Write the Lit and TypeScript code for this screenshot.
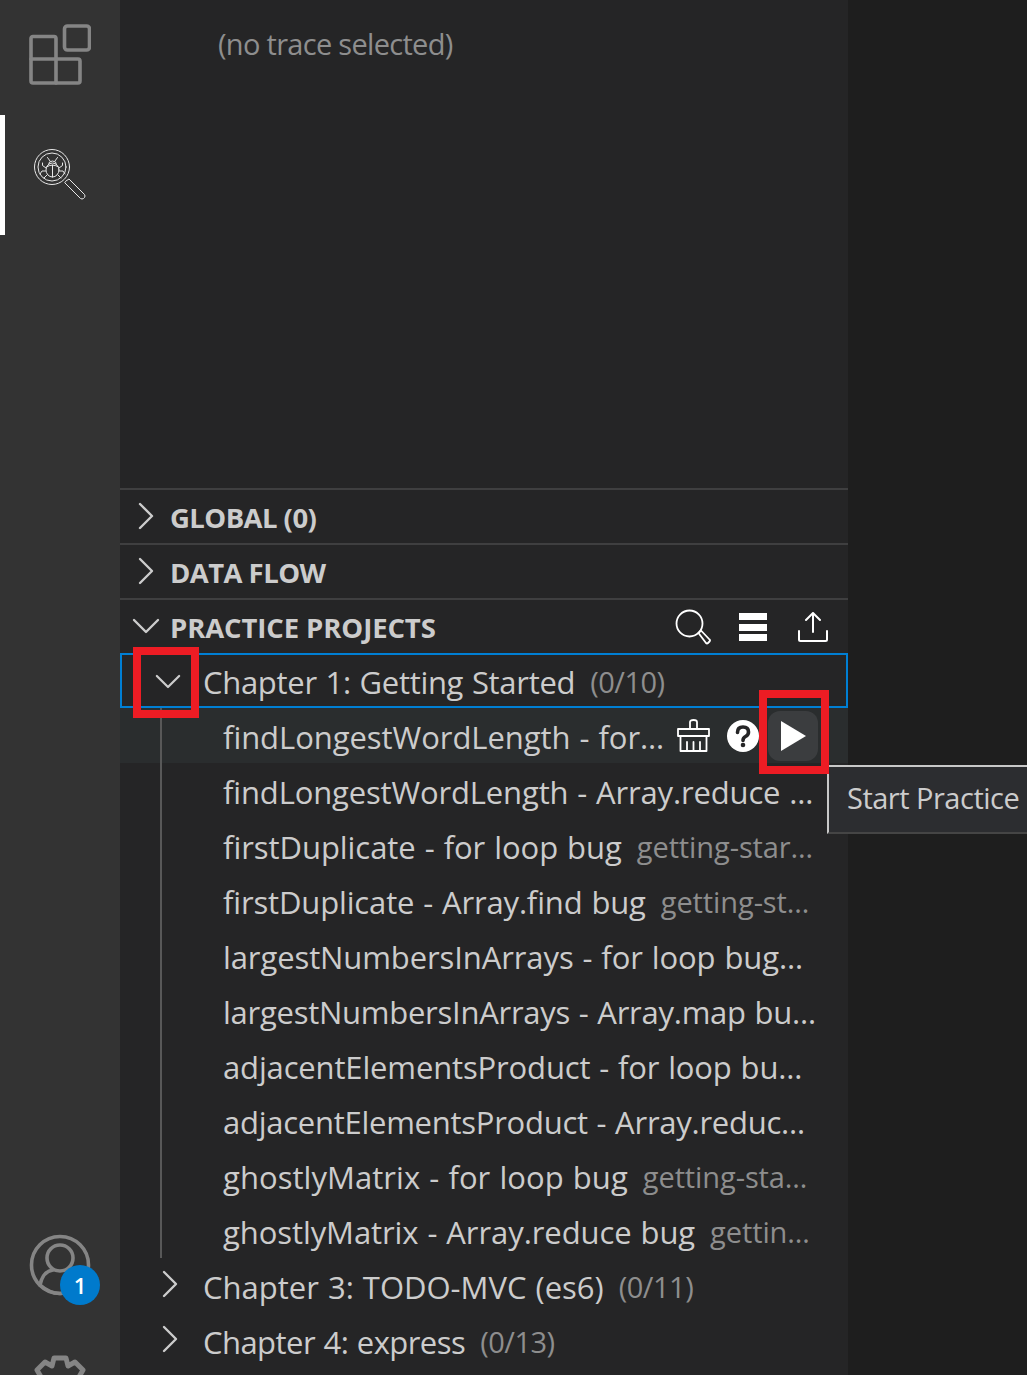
import { LitElement, html, css, svg } from 'lit';
import { customElement } from 'lit/decorators.js';

// track: per-row letter spacing (px), evens out the width difference of the fallback font
type Project = { label: string; desc?: string; track: number };

const PROJECTS: Project[] = [
  { label: 'findLongestWordLength - Array.reduce …', track: -0.15 },
  { label: 'firstDuplicate - for loop bug', desc: 'getting-star…', track: -0.05 },
  { label: 'firstDuplicate - Array.find bug', desc: 'getting-st…', track: -0.15 },
  { label: 'largestNumbersInArrays - for loop bug…', track: -0.1 },
  { label: 'largestNumbersInArrays - Array.map bu…', track: -0.26 },
  { label: 'adjacentElementsProduct - for loop bu…', track: -0.15 },
  { label: 'adjacentElementsProduct - Array.reduc…', track: -0.26 },
  { label: 'ghostlyMatrix - for loop bug', desc: 'getting-sta…', track: 0.05 },
  { label: 'ghostlyMatrix - Array.reduce bug', desc: 'gettin…', track: -0.08 },
];

const CHAPTERS: Project[] = [
  { label: 'Chapter 3: TODO-MVC (es6)', desc: '(0/11)', track: 0 },
  { label: 'Chapter 4: express', desc: '(0/13)', track: -0.55 },
];

const chevronRight = html`<svg class="chev" viewBox="0 0 16 28"><path d="M2 2l12 12L2 26" /></svg>`;
const chevronDown = html`<svg class="chev-down" viewBox="0 0 28 16"><path d="M2 2l12 12L26 2" /></svg>`;

@customElement('app-root')
export class AppRoot extends LitElement {
  static styles = css`
    :host {
      display: flex;
      position: relative;
      height: 1375px;
      overflow: hidden;
      background: #1e1e1e;
      color: #cccccc;
      font-family: 'Open Sans', 'Noto Sans', sans-serif;
      font-size: 31px;
      letter-spacing: -0.05px;
      word-spacing: 1px;
    }

    svg {
      display: block;
      fill: none;
      stroke-linecap: round;
      stroke-linejoin: round;
    }

    .activity {
      position: relative;
      flex: 0 0 120px;
      display: flex;
      flex-direction: column;
      background: #333333;
    }

    .activity-item {
      position: relative;
      height: 120px;
      display: flex;
      align-items: center;
      justify-content: center;
    }

    .activity-item.first {
      height: 115px;
      box-sizing: border-box;
      padding: 0 2px 5px 0;
    }

    .activity-item.active {
      border-left: 5px solid #ffffff;
      padding-right: 5px;
      box-sizing: border-box;
    }

    .activity-bottom {
      margin-top: auto;
      margin-bottom: -36px;
      display: flex;
      flex-direction: column;
      align-items: center;
      gap: 62px;
    }

    .account {
      position: relative;
      width: 120px;
      height: 60px;
    }

    .account svg {
      margin: 0 auto;
    }

    .badge {
      position: absolute;
      left: 60px;
      top: 32px;
      width: 40px;
      height: 40px;
      border-radius: 50%;
      background: #007acc;
      color: #ffffff;
      font-size: 22px;
      font-weight: 600;
      letter-spacing: 0;
      display: flex;
      align-items: center;
      justify-content: center;
    }

    .sidebar {
      flex: 0 0 728px;
      display: flex;
      flex-direction: column;
      background: #252526;
      overflow: hidden;
    }

    .trace {
      flex: 0 0 488px;
      box-sizing: border-box;
      padding: 21px 0 0 98px;
      font-size: 29px;
      line-height: 46px;
      letter-spacing: -0.7px;
      word-spacing: 0;
      color: #8e8e8e;
    }

    .section {
      flex: 0 0 55px;
      box-sizing: border-box;
      height: 55px;
      display: flex;
      align-items: center;
      padding-top: 2px;
      border-top: 2.5px solid #3f3f40;
      font-size: 27.5px;
      font-weight: 700;
      letter-spacing: -0.55px;
      word-spacing: 0;
    }

    .section.wide {
      letter-spacing: -0.1px;
    }

    .section .twist {
      flex: 0 0 50px;
      display: flex;
      justify-content: center;
      margin-bottom: 4px;
      padding-left: 1px;
      box-sizing: border-box;
    }

    .section .actions {
      margin: 0 20px 2px auto;
      display: flex;
      align-items: center;
      gap: 28px;
    }

    .section .actions .list {
      margin-right: 3px;
    }

    .row {
      flex: 0 0 55px;
      box-sizing: border-box;
      height: 55px;
      display: flex;
      align-items: center;
      padding-top: 2px;
      white-space: nowrap;
    }

    .row.chapter {
      padding-left: 40px;
      letter-spacing: -0.3px;
    }

    .row.chapter .twist {
      flex: 0 0 43px;
      display: flex;
      margin-bottom: 5px;
      padding-left: 2px;
      box-sizing: border-box;
    }

    .row.focused {
      border: 2px solid #007fd4;
      padding-left: 31px;
    }

    .row.focused .twist {
      flex: 0 0 50px;
      margin-bottom: 0;
    }

    .row.focused .chev-down {
      width: 26px;
      height: 15px;
    }

    .row.project {
      padding-left: 103px;
    }

    .row.hover {
      background: #2a2d2e;
    }

    .desc {
      margin-left: 15px;
      font-size: 29px;
      letter-spacing: -0.1px;
      word-spacing: 0;
      color: #8e8e8e;
    }

    .chapter .desc {
      letter-spacing: -0.5px;
    }

    .tree {
      position: relative;
      display: flex;
      flex-direction: column;
    }

    .guide {
      position: absolute;
      left: 40px;
      top: 0;
      bottom: 0;
      width: 2px;
      background: #585858;
    }

    .row-actions {
      margin: 0 30px 2px auto;
      display: flex;
      align-items: center;
    }

    .row-actions .clean {
      margin-right: 17px;
    }

    .play {
      width: 50px;
      height: 50px;
      margin-left: 9px;
      padding-left: 2px;
      box-sizing: border-box;
      border-radius: 12px;
      background: #3b3d3f;
      display: flex;
      align-items: center;
      justify-content: center;
    }

    .chev {
      width: 16px;
      height: 28px;
      stroke: #cccccc;
      stroke-width: 2.4;
    }

    .chev-down {
      width: 28px;
      height: 16px;
      stroke: #cccccc;
      stroke-width: 2.4;
    }

    .editor {
      flex: 1;
      background: #1e1e1e;
    }

    .tooltip {
      position: absolute;
      left: 827px;
      top: 765px;
      width: 200px;
      height: 69px;
      box-sizing: border-box;
      padding: 0 0 4px 18px;
      display: flex;
      align-items: center;
      background: #2c2d30;
      border-top: 2.5px solid #c8c8c8;
      border-left: 2px solid #c8c8c8;
      border-bottom: 2.5px solid #454545;
      white-space: nowrap;
      font-size: 29px;
      letter-spacing: -0.5px;
      word-spacing: 0;
      color: #cccccc;
    }

    .mark {
      position: absolute;
      box-sizing: border-box;
      border: 8px solid #ed1c24;
    }

    .mark.chevron {
      left: 133px;
      top: 647px;
      width: 66px;
      height: 71px;
    }

    .mark.start {
      left: 759px;
      top: 690px;
      width: 70px;
      height: 84px;
    }
  `;

  private extensionsIcon() {
    return html`<svg width="64" height="64" viewBox="0 0 64 64" stroke="#858585" stroke-width="3.6">
      <path d="M4 15.5a2 2 0 0 1 2-2h21a2 2 0 0 1 2 2v44.500H6a2 2 0 0 1-2-2z" />
      <path d="M4 36h47a2 2 0 0 1 2 2v20a2 2 0 0 1-2 2H29" />
      <rect x="37.500" y="3" width="25" height="24" rx="3" />
    </svg>`;
  }

  private bugSearchIcon() {
    return html`<svg width="54" height="54" viewBox="0 0 54 54" stroke="#e8e8e8" stroke-width="1">
      <circle cx="19" cy="19" r="17.500" />
      <circle cx="19" cy="19" r="14" />
      <ellipse cx="19.500" cy="22" rx="6.500" ry="7" />
      <path d="M19.500 17v12M13.500 19q6-4 12 0" />
      <path d="M15.500 16.500q0-3.500 4-3.500t4 3.500" />
      <path d="M17 13l-2.500-3.500M22 13l2.500-3.500" />
      <path d="M13 20l-3.500-2.500V15M26 20l3.500-2.500V15M12.500 23H9l-2 3M26.500 23H30l2 3M14 27l-3 3M25 27l3 3" />
      <path d="M33 33l3-2 15.500 15.500q1 1.500 0 3l-1 1q-1.500 1-3 0L32 35z" />
    </svg>`;
  }

  private accountIcon() {
    return svg`<svg width="64" height="64" viewBox="0 0 64 64" stroke="#858585" stroke-width="3.6">
      <circle cx="32" cy="32" r="28.500" />
      <circle cx="32" cy="25" r="13" />
      <path d="M12 52q3-14 13-15M52 52q-3-14-13-15M12 52q20 17 40 0" />
    </svg>`;
  }

  private gearIcon() {
    return html`<svg width="56" height="56" viewBox="0 0 56 56" stroke="#858585" stroke-width="5">
      <path d="M22 3h12l2 8 7-4 8 8-4 7 8 2v12l-8 2 4 7-8 8-7-4-2 8H22l-2-8-7 4-8-8 4-7-8-2V24l8-2-4-7 8-8 7 4z" />
    </svg>`;
  }

  private searchIcon() {
    return html`<svg width="36" height="36" viewBox="0 0 36 36" stroke="#ffffff" stroke-width="1.800">
      <circle cx="14.500" cy="14.500" r="13" />
      <path d="M23.500 24l2.500-2.500 8.500 9q1 1 0 2l-1.500 1.500q-1 1-2 0z" />
    </svg>`;
  }

  private listIcon() {
    return html`<svg class="list" width="28" height="28" viewBox="0 0 28 28">
      <rect x="0" y="0" width="28" height="7" fill="#ffffff" />
      <rect x="0" y="11" width="28" height="7" fill="#ffffff" />
      <rect x="0" y="21" width="28" height="7" fill="#ffffff" />
    </svg>`;
  }

  private exportIcon() {
    return html`<svg width="30" height="30" viewBox="0 0 30 30" stroke="#ffffff" stroke-width="2">
      <path d="M15 20V1.500M8 8l7-7 7 7M1 19v8.500q0 1.500 1.500 1.500h25q1.500 0 1.500-1.500V19" />
    </svg>`;
  }

  private cleanIcon() {
    return html`<svg width="33" height="33" viewBox="0 0 33 33" stroke="#ffffff" stroke-width="1.800">
      <path d="M13 10V3q0-2 3.500-2T20 3v7" />
      <path d="M1 10h31v7H1z" />
      <path d="M3.500 17v15h26V17M10 32v-9M16.500 32v-9M23 32v-9" />
    </svg>`;
  }

  private helpIcon() {
    return html`<svg width="32" height="32" viewBox="0 0 32 32">
      <circle cx="16" cy="16" r="16" fill="#ffffff" />
      <path d="M10.500 12.500q0-5.500 5.500-5.500t5.500 5q0 3-3 4.500-2.500 1.300-2.500 4" stroke="#252526" stroke-width="3.600" />
      <circle cx="16" cy="25" r="2.300" fill="#252526" />
    </svg>`;
  }

  render() {
    return html`
      <nav class="activity">
        <div class="activity-item first">${this.extensionsIcon()}</div>
        <div class="activity-item active">${this.bugSearchIcon()}</div>
        <div class="activity-bottom">
          <div class="account">
            ${this.accountIcon()}
            <span class="badge">1</span>
          </div>
          ${this.gearIcon()}
        </div>
      </nav>

      <aside class="sidebar">
        <div class="trace">(no trace selected)</div>

        <div class="section"><span class="twist">${chevronRight}</span>GLOBAL (0)</div>
        <div class="section"><span class="twist">${chevronRight}</span>DATA FLOW</div>
        <div class="section wide">
          <span class="twist">${chevronDown}</span>PRACTICE PROJECTS
          <span class="actions">${this.searchIcon()}${this.listIcon()}${this.exportIcon()}</span>
        </div>

        <div class="row chapter focused">
          <span class="twist">${chevronDown}</span>Chapter 1: Getting Started
          <span class="desc">(0/10)</span>
        </div>

        <div class="tree">
          <div class="row project hover">
            findLongestWordLength - for…
            <span class="row-actions">
              <span class="clean">${this.cleanIcon()}</span>
              ${this.helpIcon()}
              <span class="play">
                <svg width="28" height="32" viewBox="0 0 28 32">
                  <path d="M1 1l25 15L1 31z" fill="#ffffff" />
                </svg>
              </span>
            </span>
          </div>
          ${PROJECTS.map(
            (p) => html`<div class="row project">
              <span style="letter-spacing: ${p.track}px">${p.label}</span>
              ${p.desc ? html`<span class="desc">${p.desc}</span>` : ''}
            </div>`
          )}
          <span class="guide"></span>
        </div>

        ${CHAPTERS.map(
          (c) => html`<div class="row chapter">
            <span class="twist">${chevronRight}</span>
            <span style="letter-spacing: ${c.track}px">${c.label}</span>
            <span class="desc">${c.desc}</span>
          </div>`
        )}
      </aside>

      <div class="editor"></div>

      <div class="tooltip">Start Practice</div>
      <span class="mark chevron"></span>
      <span class="mark start"></span>
    `;
  }
}
